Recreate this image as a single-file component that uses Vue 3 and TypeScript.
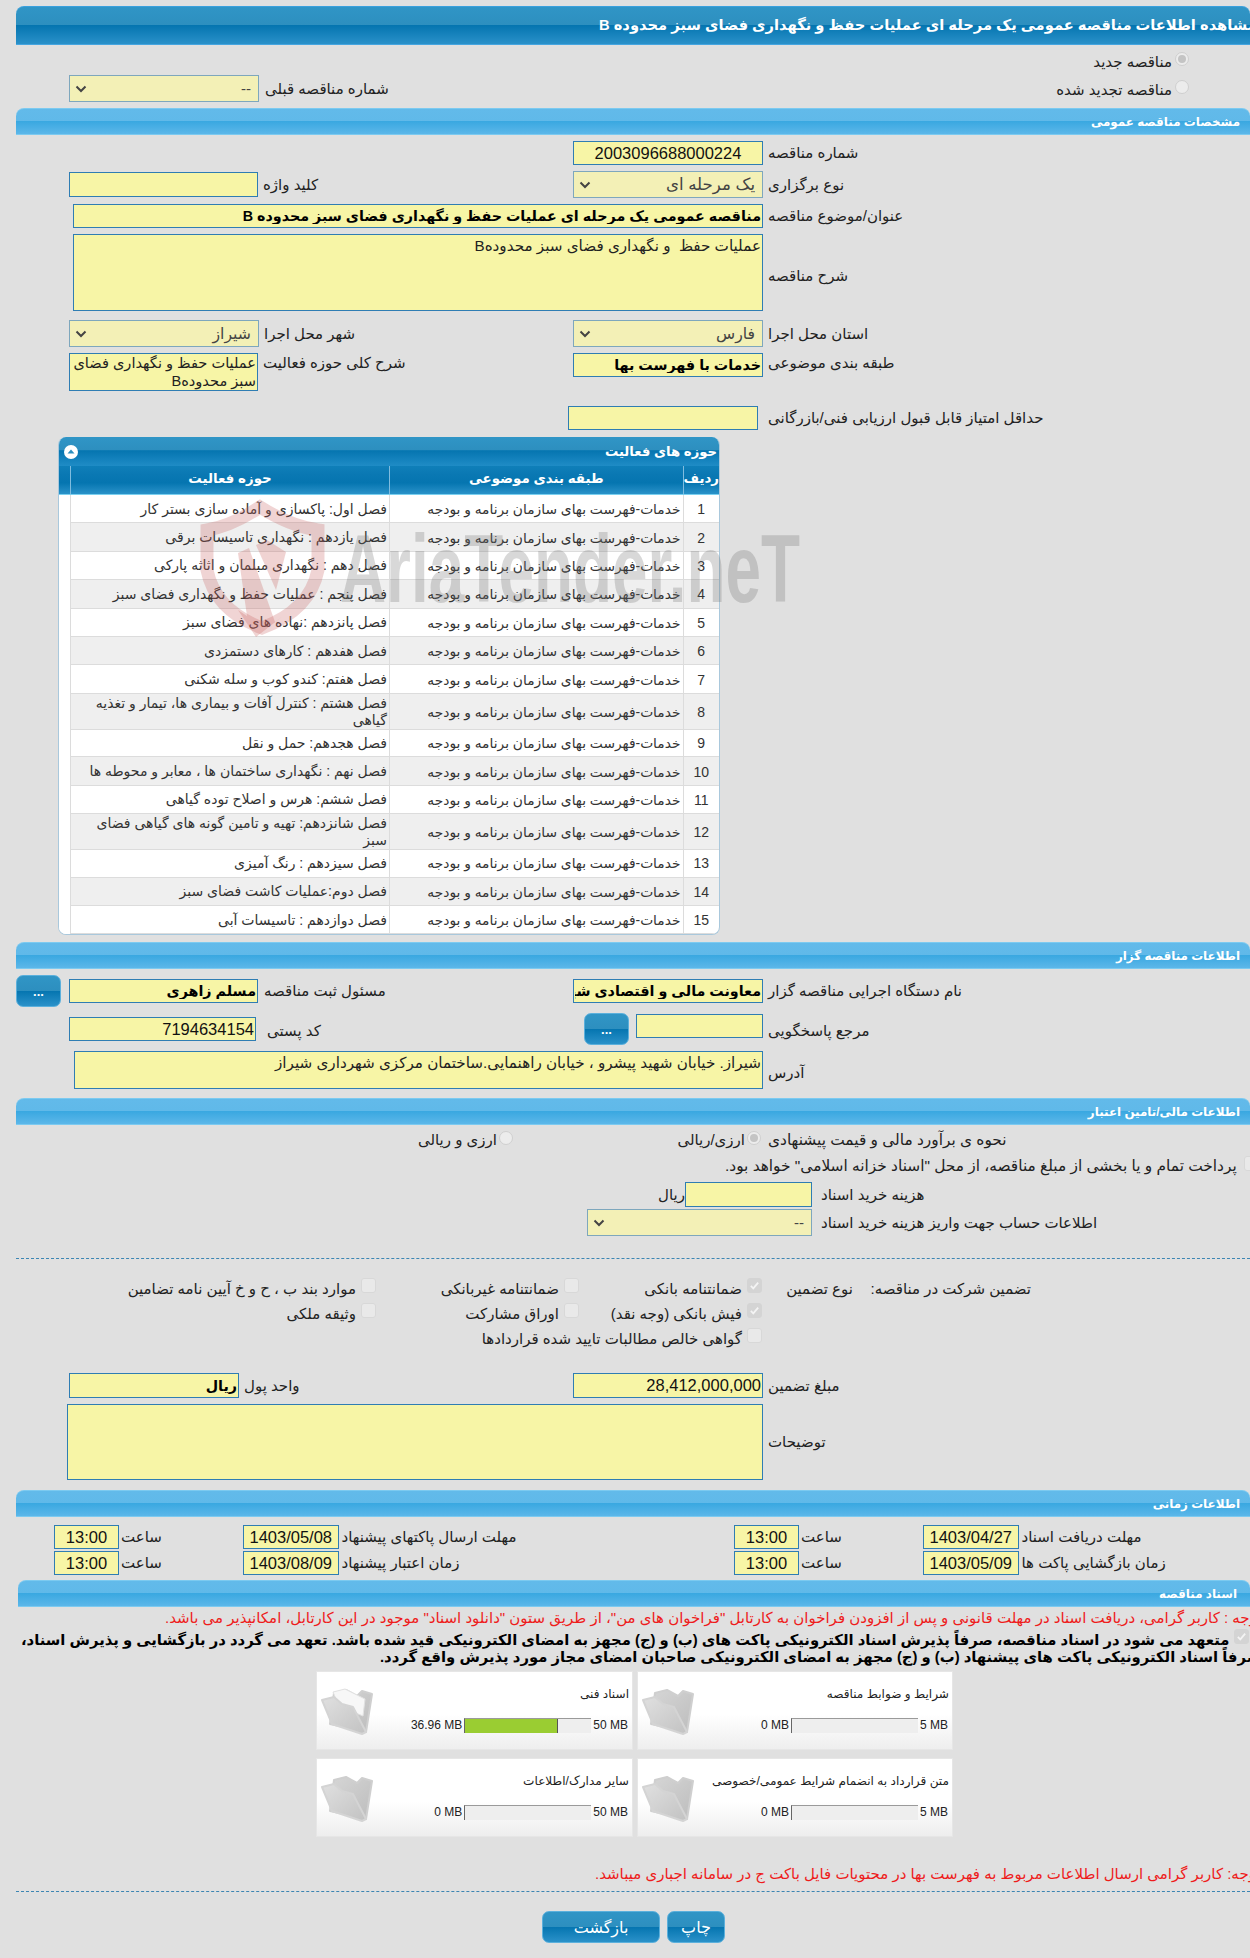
<script setup lang="ts">
interface Activity { id: number; text: string; tall?: boolean }
interface FileCard { title: string; used: string; max: string; pct: number; paper?: boolean; wide?: boolean }
interface Check { text: string; on?: boolean }

const category = 'خدمات-فهرست بهای سازمان برنامه و بودجه'
const activities: Activity[] = [
  { id: 1, text: 'فصل اول:  پاکسازی و آماده سازی بستر کار' },
  { id: 2, text: 'فصل یازدهم : نگهداری تاسیسات برقی' },
  { id: 3, text: 'فصل دهم : نگهداری مبلمان و اثاثه پارکی' },
  { id: 4, text: 'فصل پنجم : عملیات حفظ و نگهداری فضای سبز' },
  { id: 5, text: 'فصل پانزدهم :نهاده های فضای سبز' },
  { id: 6, text: 'فصل هفدهم : کارهای دستمزدی' },
  { id: 7, text: 'فصل هفتم: کندو کوب و سله شکنی' },
  { id: 8, text: 'فصل هشتم : کنترل آفات و بیماری ها، تیمار و تغذیه گیاهی', tall: true },
  { id: 9, text: 'فصل هجدهم: حمل و نقل' },
  { id: 10, text: 'فصل نهم : نگهداری ساختمان ها ، معابر و محوطه ها' },
  { id: 11, text: 'فصل ششم: هرس و اصلاح توده گیاهی' },
  { id: 12, text: 'فصل شانزدهم: تهیه و تامین گونه های گیاهی فضای سبز', tall: true },
  { id: 13, text: 'فصل سیزدهم : رنگ آمیزی' },
  { id: 14, text: 'فصل دوم:عملیات کاشت فضای سبز' },
  { id: 15, text: 'فصل دوازدهم : تاسیسات آبی' },
]
const guarantees: Check[][] = [
  [{ text: 'موارد بند ب ، ح و خ آیین نامه تضامین' }, { text: 'ضمانتنامه غیربانکی' }, { text: 'ضمانتنامه بانکی', on: true }],
  [{ text: 'وثیقه ملکی' }, { text: 'اوراق مشارکت' }, { text: 'فیش بانکی (وجه نقد)', on: true }],
]
const files: FileCard[] = [
  { title: 'اسناد فنی', used: '36.96 MB', max: '50 MB', pct: 73.9, paper: true, wide: true },
  { title: 'شرایط و ضوابط مناقصه', used: '0 MB', max: '5 MB', pct: 0 },
  { title: 'سایر مدارک/اطلاعات', used: '0 MB', max: '50 MB', pct: 0, wide: true },
  { title: 'متن قرارداد به انضمام شرایط عمومی/خصوصی', used: '0 MB', max: '5 MB', pct: 0 },
]
const dates = [
  [
    { label: 'مهلت ارسال پاکتهای پیشنهاد', value: '1403/05/08' },
    { label: 'مهلت دریافت اسناد', value: '1403/04/27' },
  ],
  [
    { label: 'زمان اعتبار پیشنهاد', value: '1403/08/09' },
    { label: 'زمان بازگشایی پاکت ها', value: '1403/05/09' },
  ],
]
</script>

<template>
  <div class="page">
    <div class="title"><span>مشاهده اطلاعات مناقصه عمومی یک مرحله ای عملیات حفظ و نگهداری فضای سبز محدوده B</span></div>

    <div class="row m5 h16">
      <div class="cell"></div>
      <div class="radio-end"><span class="lbl down3">مناقصه جدید</span><span class="radio on"></span></div>
    </div>
    <div class="row m9 h27">
      <div class="cell left">
        <div class="select w190"><svg class="chev" viewBox="0 0 12 8"><path d="M1.5 1.5 6 6l4.5-4.5" /></svg><span>--</span></div>
        <span class="lbl g6">شماره مناقصه قبلی</span>
      </div>
      <div class="radio-end lift2"><span class="lbl down3">مناقصه تجدید شده</span><span class="radio"></span></div>
    </div>

    <div class="bar m6"><span>مشخصات مناقصه عمومی</span></div>

    <div class="row m6">
      <div class="cell"></div>
      <div class="cell"><input class="in w190 num center" readonly value="2003096688000224" /><span class="lbl g5">شماره مناقصه</span></div>
    </div>
    <div class="row m6 h27">
      <div class="cell left">
        <input class="in w189 h25" readonly /><span class="lbl g5">کلید واژه</span>
      </div>
      <div class="cell">
        <div class="select w190"><svg class="chev" viewBox="0 0 12 8"><path d="M1.5 1.5 6 6l4.5-4.5" /></svg><span class="huge">یک مرحله ای</span></div>
        <span class="lbl g5">نوع برگزاری</span>
      </div>
    </div>
    <div class="row-full m6 i57">
      <input class="in w690 bold" dir="rtl" readonly value="مناقصه عمومی یک مرحله ای عملیات حفظ و نگهداری فضای سبز محدوده B" />
      <span class="lbl g5">عنوان/موضوع مناقصه</span>
    </div>
    <div class="row-full m6 i57">
      <textarea class="in w690 h77" dir="rtl" readonly>عملیات حفظ  و نگهداری فضای سبز محدودهB</textarea>
      <span class="lbl g5 down3">شرح مناقصه</span>
    </div>
    <div class="row m9 h27">
      <div class="cell left">
        <div class="select w190"><svg class="chev" viewBox="0 0 12 8"><path d="M1.5 1.5 6 6l4.5-4.5" /></svg><span class="big">شیراز</span></div>
        <span class="lbl g5">شهر محل اجرا</span>
      </div>
      <div class="cell">
        <div class="select w190"><svg class="chev" viewBox="0 0 12 8"><path d="M1.5 1.5 6 6l4.5-4.5" /></svg><span class="big">فارس</span></div>
        <span class="lbl g5">استان محل اجرا</span>
      </div>
    </div>
    <div class="row m6 top">
      <div class="cell left top">
        <textarea class="in w189 h38 tight" dir="rtl" readonly>عملیات حفظ و نگهداری فضای سبز محدودهB</textarea>
        <span class="lbl g5 lift">شرح کلی حوزه فعالیت</span>
      </div>
      <div class="cell top">
        <input class="in w190 bold" dir="rtl" readonly value="خدمات با فهرست بها" />
        <span class="lbl g5 lift">طبقه بندی موضوعی</span>
      </div>
    </div>
    <div class="row-full m15 i552">
      <input class="in w190" readonly /><span class="lbl g10">حداقل امتیاز قابل قبول ارزیابی فنی/بازرگانی</span>
    </div>

    <section class="panel">
      <header class="cap">
        <span class="collapse"><svg viewBox="0 0 14 14"><circle cx="7" cy="7" r="7" fill="#fff" /><path d="M3.5 8.6 7 4.6l3.5 4z" fill="#2c8fc0" /></svg></span>
        <span class="cap-text">حوزه های فعالیت</span>
      </header>
      <div class="thead">
        <div class="c0"></div>
        <div class="c3">حوزه فعالیت</div>
        <div class="c2">طبقه بندی موضوعی</div>
        <div class="c1">ردیف</div>
      </div>
      <div v-for="(a, i) in activities" :key="a.id" class="trow" :class="{ alt: i % 2 === 1, tall: a.tall }">
        <div class="c0"></div>
        <div class="c3"><span>{{ a.text }}</span></div>
        <div class="c2"><span>{{ category }}</span></div>
        <div class="c1">{{ a.id }}</div>
      </div>
    </section>

    <div class="bar m7"><span>اطلاعات مناقصه گزار</span></div>

    <div class="row m6 h32">
      <div class="cell">
        <button class="btn dots" type="button">...</button>
        <input class="in w189 bold i8" dir="rtl" readonly value="مسلم زاهری" /><span class="lbl g6">مسئول ثبت مناقصه</span>
      </div>
      <div class="cell"><input class="in w190 bold" dir="rtl" readonly value="معاونت مالی و اقتصادی شهرداری شیراز" /><span class="lbl g5">نام دستگاه اجرایی مناقصه گزار</span></div>
    </div>
    <div class="row m6 h32">
      <div class="cell left">
        <input class="in w187 num" readonly value="7194634154" /><span class="lbl g11 down2">کد پستی</span>
      </div>
      <div class="cell">
        <button class="btn dots short i11" type="button">...</button>
        <input class="in w127 i7 lift3" readonly /><span class="lbl g5 down2">مرجع پاسخگویی</span>
      </div>
    </div>
    <div class="row-full m6 i58">
      <textarea class="in w689 h38" dir="rtl" readonly>شیراز. خیابان شهید پیشرو ، خیابان راهنمایی.ساختمان مرکزی شهرداری شیراز</textarea>
      <span class="lbl g5 down3">آدرس</span>
    </div>

    <div class="bar m9"><span>اطلاعات مالی/تامین اعتبار</span></div>

    <div class="row m5 h20">
      <div class="cell"><div class="choice w497"><span class="lbl">ارزی و ریالی</span><span class="radio s2"></span></div></div>
      <div class="cell">
        <div class="choice w188"><span class="lbl">ارزی/ریالی</span><span class="radio on s2"></span></div><span class="lbl g7 xl">نحوه ی برآورد مالی و قیمت پیشنهادی</span>
      </div>
    </div>
    <div class="line m6 h20 i709">
      <span class="lbl xl">پرداخت تمام و یا بخشی از مبلغ مناقصه، از محل "اسناد خزانه اسلامی" خواهد بود.</span>
      <span class="chk far"></span>
    </div>
    <div class="row-full m6 i646">
      <span class="lbl riyal">ریال</span><input class="in w127 h25" readonly /><span class="lbl g9">هزینه خرید اسناد</span>
    </div>
    <div class="row-full m2 i571">
      <div class="select w225 h26"><svg class="chev" viewBox="0 0 12 8"><path d="M1.5 1.5 6 6l4.5-4.5" /></svg><span>--</span></div>
      <span class="lbl g9">اطلاعات حساب جهت واریز هزینه خرید اسناد</span>
    </div>

    <div class="dash m22"></div>

    <div class="gr m19">
      <template v-for="c in guarantees[0]" :key="c.text">
        <div class="gcell"><span class="chk" :class="{ on: c.on }"><svg v-if="c.on" viewBox="0 0 16 16"><path d="M3.5 8.5l3 3 6-7" /></svg></span><span class="lbl">{{ c.text }}</span></div>
      </template>
      <div class="gcell"><span class="lbl">نوع تضمین</span></div>
      <div class="gcell"><span class="lbl">تضمین شرکت در مناقصه:</span></div>
    </div>
    <div class="gr m5">
      <template v-for="c in guarantees[1]" :key="c.text">
        <div class="gcell"><span class="chk" :class="{ on: c.on }"><svg v-if="c.on" viewBox="0 0 16 16"><path d="M3.5 8.5l3 3 6-7" /></svg></span><span class="lbl">{{ c.text }}</span></div>
      </template>
    </div>
    <div class="gr m5">
      <div class="gcell"></div>
      <div class="gcell"></div>
      <div class="gcell"><span class="chk"></span><span class="lbl">گواهی خالص مطالبات تایید شده قراردادها</span></div>
    </div>

    <div class="row m25">
      <div class="cell left">
        <input class="in w170 h25 bold" dir="rtl" readonly value="ریال" /><span class="lbl g5">واحد پول</span>
      </div>
      <div class="cell">
        <input class="in w190 h25 num" readonly value="28,412,000,000" /><span class="lbl g5">مبلغ تضمین</span>
      </div>
    </div>
    <div class="row-full m6 i51">
      <textarea class="in w696 h76" dir="rtl" readonly></textarea>
      <span class="lbl g5">توضیحات</span>
    </div>

    <div class="bar m10"><span>اطلاعات زمانی</span></div>

    <div v-for="(r, i) in dates" :key="i" class="dates" :class="i === 0 ? 'm8' : 'm2'">
      <div v-for="d in r" :key="d.value" class="dgroup">
        <input class="in time num center" readonly value="13:00" />
        <span class="lbl stime">ساعت</span>
        <input class="in date num center" readonly :value="d.value" />
        <span class="lbl g3">{{ d.label }}</span>
      </div>
    </div>

    <div class="bar m5 inset2"><span>اسناد مناقصه</span></div>

    <div class="line m2 h18 i149 red">
      <span class="lbl">توجه : کاربر گرامی، دریافت اسناد در مهلت قانونی و پس از افزودن فراخوان به کارتابل "فراخوان های من"، از طریق ستون "دانلود اسناد" موجود در این کارتابل، امکانپذیر می باشد.</span>
    </div>
    <div class="line m4 h17 i5 strong">
      <span class="lbl">متعهد می شود در اسناد مناقصه، صرفاً پذیرش اسناد الکترونیکی پاکت های (ب) و (ج) مجهز به امضای الکترونیکی قید شده باشد. تعهد می گردد در بازگشایی و پذیرش اسناد،</span>
      <span class="chk on far2"><svg viewBox="0 0 16 16"><path d="M3.5 8.5l3 3 6-7" /></svg></span>
    </div>
    <div class="line h17 i364 strong">
      <span class="lbl">صرفاً اسناد الکترونیکی پاکت های پیشنهاد (ب) و (ج) مجهز به امضای الکترونیکی صاحبان امضای مجاز مورد پذیرش واقع گردد.</span>
    </div>

    <div class="cards">
      <article v-for="f in files" :key="f.title" class="card">
        <svg class="folder" viewBox="7 7 60 79">
          <defs>
            <linearGradient id="fb" x1="0" y1="0" x2="1" y2="1"><stop offset="0" stop-color="#d6d6d6" /><stop offset="1" stop-color="#bdbdbd" /></linearGradient>
            <linearGradient id="ff" x1="0" y1="0" x2="1" y2="1"><stop offset="0" stop-color="#e0e0e0" /><stop offset="1" stop-color="#c2c2c2" /></linearGradient>
          </defs>
          <path d="M25 29 37 26 48 32 53 27 63 30 57 68 21 60Z" fill="url(#fb)" stroke="#cfcfcf" stroke-linejoin="round" stroke-width="2" />
          <path v-if="f.paper" d="M24 28 36 25 56 35 54 52 30 42Z" fill="#f7f7f7" stroke="#e2e2e2" />
          <path d="M13 36 25 33 33 40 44 43 57 68 53 70 23 60Z" fill="url(#ff)" stroke="#d4d4d4" stroke-linejoin="round" stroke-width="2" />
        </svg>
        <div class="card-body">
          <div class="card-title">{{ f.title }}</div>
          <div class="meter">
            <span class="used">{{ f.used }}</span>
            <div class="track"><div class="fill" :style="{ width: f.pct + '%' }"></div></div>
            <span class="max">{{ f.max }}</span>
          </div>
        </div>
      </article>
    </div>

    <div class="line m28 h18 i579 red">
      <span class="lbl">توجه: کاربر گرامی ارسال اطلاعات مربوط به فهرست بها در محتویات فایل باکت ج در سامانه اجباری میباشد.</span>
    </div>

    <div class="dash m8"></div>

    <div class="actions">
      <button class="btn act wide" type="button">بازگشت</button>
      <button class="btn act" type="button">چاپ</button>
    </div>

    <svg class="watermark" viewBox="190 490 620 160" aria-hidden="true">
      <g fill="none" stroke="#c8605f" stroke-opacity=".27">
        <path stroke-width="13" d="M207 530Q232 526 260 507 290 526 318 530V570Q310 610 262 628 215 610 207 570Z" />
      </g>
      <g fill="#c8605f" fill-opacity=".28">
        <path d="M238 553 249 548 275 622 283 616 256 637 238 610 247 616Z" />
        <path d="M256 545 267 540 286 552 276 590Z" />
      </g>
      <text x="340" y="602" textLength="460" lengthAdjust="spacingAndGlyphs" class="wm-text">AriaTender.neT</text>
    </svg>
  </div>
</template>

<style scoped>
.page {
  position: relative;
  width: 1250px;
  height: 1958px;
  overflow: hidden;
  padding: 6px 0 0 16px;
  box-sizing: border-box;
  background: #e0e0e0;
  font-family: "Liberation Sans", "DejaVu Sans", sans-serif;
  font-size: 15px;
  color: #222;
  direction: ltr;
}
.title {
  height: 39px;
  box-sizing: border-box;
  background: linear-gradient(#3095c6 0, #2d8fbf 49%, #0575b0 50%, #2a91c9 100%);
  border-top: 1px solid #3aa0dd;
  border-bottom: 1px solid #45a5e0;
  border-radius: 8px 8px 0 0;
  color: #fff;
  font-weight: bold;
  font-size: 14.7px;
  line-height: 36px;
  white-space: nowrap;
  padding-left: 583px;
  overflow: hidden;
  direction: ltr;
}
.title span { display: inline-block; direction: rtl; }
.bar {
  height: 27px;
  box-sizing: border-box;
  background: linear-gradient(#62baea 0, #60b9e9 48%, #3aa8e1 50%, #5cb7e9 100%);
  border-top: 1px solid #7ccaf0;
  border-bottom: 1px solid #7ccaf0;
  border-radius: 8px 8px 0 0;
  color: #fff;
  font-weight: bold;
  font-size: 11.9px;
  line-height: 26px;
  text-align: right;
  padding-right: 10px;
  direction: rtl;
}
.inset2 { margin-left: 2px; padding-right: 13px; }
.row { display: grid; grid-template-columns: 557px 1fr; align-items: center; }
.row.top { align-items: start; height: 38px; }
.row-full { display: flex; align-items: center; }
.line { display: flex; align-items: center; white-space: nowrap; }
.cell { display: flex; align-items: center; min-width: 0; }
.cell.top { align-items: flex-start; }
.cell.left { padding-left: 53px; }
.radio-end { display: flex; align-items: center; justify-content: flex-end; padding-right: 61px; gap: 3px; height: 100%; }
.choice { display: flex; align-items: center; justify-content: flex-end; flex: none; }
.w497 { width: 497px; }
.w188 { width: 188px; }
.lbl { direction: rtl; white-space: nowrap; text-align: left; }
.xl { font-size: 15.4px; }
.riyal { width: 23px; flex: none; text-align: right; }
.down2 { position: relative; top: 2px; }
.down3 { position: relative; top: 3px; }
.lift2 { position: relative; top: -1.5px; }
.lift3 { position: relative; top: -3px; }
.lift { margin-top: 1px; }
.g3 { margin-left: 3px; }
.g5 { margin-left: 5px; }
.g6 { margin-left: 6px; }
.g7 { margin-left: 7px; }
.g9 { margin-left: 9px; }
.g10 { margin-left: 10px; }
.g11 { margin-left: 11px; }
.m2 { margin-top: 2px; }
.m4 { margin-top: 4px; }
.m5 { margin-top: 5px; }
.m6 { margin-top: 6px; }
.m7 { margin-top: 7px; }
.m8 { margin-top: 8px; }
.m9 { margin-top: 9px; }
.m10 { margin-top: 10px; }
.m15 { margin-top: 15px; }
.m19 { margin-top: 19px; }
.m22 { margin-top: 22px; }
.m25 { margin-top: 25px; }
.m28 { margin-top: 28px; }
.h16 { height: 16px; }
.h17 { height: 17px; }
.h18 { height: 18px; }
.h20 { height: 20px; }
.h27 { height: 27px; }
.h32 { height: 32px; }
.i5 { padding-left: 5px; }
.i51 { padding-left: 51px; }
.i57 { padding-left: 57px; }
.i58 { padding-left: 58px; }
.i149 { padding-left: 149px; }
.i364 { padding-left: 364px; }
.i552 { padding-left: 552px; }
.i571 { padding-left: 571px; }
.i579 { padding-left: 579px; }
.i646 { padding-left: 646px; }
.i709 { padding-left: 709px; }
.i7 { margin-left: 7px; }
.i8 { margin-left: 8px; }
.i11 { margin-left: 11px; }

.in {
  box-sizing: border-box;
  height: 24px;
  background: #f7f5a6;
  border: 1.5px solid #2f7db3;
  font: inherit;
  font-size: 15.2px;
  color: #222;
  padding: 0 1px;
  outline: none;
  resize: none;
  overflow: hidden;
  display: block;
  flex: none;
}
input.in { text-align: right; }
textarea.in { padding: 2px 1px; line-height: 18px; }
textarea.in.tight { line-height: 18px; padding: 0 1px; font-size: 14.6px; }
.w127 { width: 127px; }
.w170 { width: 170px; }
.w187 { width: 187px; }
.w189 { width: 189px; }
.w190 { width: 190px; }
.w225 { width: 225px; }
.w689 { width: 689px; }
.w690 { width: 690px; }
.w696 { width: 696px; }
.h25 { height: 25px; }
.h26 { height: 26px; }
.h38 { height: 38px; }
.h76 { height: 76px; }
.h77 { height: 77px; }
.in.bold { font-weight: bold; color: #000; font-size: 14.3px; }
.in.num { font-size: 16.5px; direction: ltr; color: #111; }
input.center { text-align: center; }

.select {
  box-sizing: border-box;
  height: 27px;
  flex: none;
  display: flex;
  align-items: center;
  justify-content: space-between;
  background: #f3f0b6;
  border: 1.5px solid #7ea7bd;
  padding: 0 7px 0 5px;
  color: #444;
  direction: ltr;
}
.select span { direction: rtl; }
.select .big { font-size: 15.7px; }
.select .huge { font-size: 16.6px; }
.chev { width: 12px; height: 8px; flex: none; }
.chev path { fill: none; stroke: #444; stroke-width: 2; }

.radio {
  width: 14px;
  height: 14px;
  box-sizing: border-box;
  border-radius: 50%;
  border: 1.5px solid #cfcfcf;
  background: #ececec;
  flex: none;
  display: inline-flex;
  align-items: center;
  justify-content: center;
}
.radio.on::after { content: ""; width: 8px; height: 8px; border-radius: 50%; background: #c4c4c4; }
.radio.s2 { margin: -5px 0 0 2px; }

.chk {
  width: 15px;
  height: 15px;
  box-sizing: border-box;
  border: 1.5px solid #d8d8d8;
  border-radius: 3px;
  background: #e9e9e9;
  flex: none;
  display: block;
}
.chk.on { background: #d4d4d4; border-color: #d4d4d4; }
.chk svg { display: block; width: 100%; height: 100%; }
.chk path { fill: none; stroke: #f4f4f4; stroke-width: 2.2; }
.far { margin-left: 7px; margin-top: -5px; }
.far2 { margin-left: 5px; margin-top: -6px; }

.panel {
  margin: 7px 0 0 42px;
  width: 662px;
  height: 498px;
  box-sizing: border-box;
  background: #fff;
  border: 1px solid #a9c8dc;
  border-top: 0;
  border-radius: 8px;
  overflow: hidden;
}
.cap {
  height: 29px;
  display: flex;
  align-items: center;
  justify-content: space-between;
  padding: 0 2px 0 5px;
  color: #fff;
  font-weight: bold;
  font-size: 13.2px;
  background: linear-gradient(#3095c6 0, #2d8fbf 45%, #0575b0 47%, #1f8cc6 100%);
  direction: ltr;
}
.cap-text { direction: rtl; }
.collapse { width: 14px; height: 14px; display: block; }
.collapse svg { display: block; }
.thead, .trow {
  display: grid;
  grid-template-columns: 12px 319px 293.5px 1fr;
  direction: ltr;
}
.thead {
  height: 29px;
  background: linear-gradient(#0f7fb9 0, #0a78b3 30%, #0575b0 60%, #2a92c9 100%);
  color: #fff;
  font-weight: bold;
  font-size: 13.4px;
  border-bottom: 1px solid #7ad0f0;
  box-sizing: border-box;
}
.thead > div { border-right: 1px solid #7fbcdf; display: flex; align-items: center; justify-content: center; direction: rtl; padding-bottom: 3px; }
.thead > div:last-child { border-right: 0; }
.trow { height: 28.4px; box-sizing: border-box; color: #333; font-size: 13.8px; }
.trow.tall { height: 35.2px; }
.trow > div { border-bottom: 1px solid #dcdcdc; border-right: 1px solid #dcdcdc; display: flex; align-items: center; box-sizing: border-box; padding-top: 1px; }
.trow > .c0 { background: #fff; border-bottom: 0; }
.trow.alt > div:not(.c0) { background: #efefef; }
.trow > .c1 { border-right: 0; justify-content: center; font-size: 14px; }
.trow > .c2, .trow > .c3 { direction: rtl; text-align: right; padding: 1px 2px 0 8px; }
.trow .c3 { line-height: 17px; font-size: 14px; }

.btn {
  border: 1px solid #5bb0dc;
  border-radius: 7px;
  background: linear-gradient(#3095c6 0, #2d8fbf 49%, #0575b0 50%, #2a91c9 100%);
  color: #fff;
  font: inherit;
  padding: 0;
  flex: none;
}
.dots { width: 45px; height: 32px; font-weight: bold; font-size: 13px; line-height: 32px; }
.short { height: 32px; }

.dash { border-top: 1px dashed #3d86b3; height: 0; }

.gr { display: grid; grid-template-columns: 360px 203px 183px 91px 178px; height: 20px; }
.gcell { display: flex; direction: rtl; align-items: flex-start; gap: 5px; min-width: 0; }
.gcell .lbl { margin-top: 1px; line-height: 20px; }

.dates { display: flex; padding-left: 38px; }
.dgroup { display: flex; align-items: center; width: 680px; flex: none; }
.time { width: 65px; }
.date { width: 95.5px; padding: 0; }
.stime { width: 122px; margin-left: 2px; }
.in.time, .in.date { height: 24px; }

.red { color: #ee1c1c; font-size: 15px; }
.strong { color: #000; font-weight: bold; font-size: 14.8px; }

.cards {
  margin: 6px 0 0 300px;
  display: grid;
  grid-template-columns: 317px 316px;
  grid-auto-rows: 79px;
  column-gap: 4px;
  row-gap: 8px;
}
.card {
  display: flex;
  background: linear-gradient(#fff 0, #fff 55%, #eeeeee 100%);
  border: 1px solid #e6e6e6;
  box-sizing: border-box;
}
.folder { width: 60px; height: 79px; flex: none; margin: -1px 0 0 -1px; }
.card-body { flex: 1; min-width: 0; display: flex; flex-direction: column; padding-right: 3px; }
.card-title { direction: rtl; margin-top: 14px; height: 17px; line-height: 17px; font-size: 12.1px; white-space: nowrap; }
.meter { display: flex; align-items: center; justify-content: flex-end; margin-top: 14px; height: 16px; gap: 2px; font-size: 12px; padding-right: 1px; }
.track { width: 127px; height: 15px; box-sizing: border-box; background: #eeeeee; border-top: 1px solid #9a9a9a; border-left: 1px solid #666; }
.fill { height: 100%; background: #9acd32; border-right: 1px solid #555; box-sizing: border-box; }
.fill[style*="width: 0%"] { border-right: 0; }

.actions { display: flex; margin: 19px 0 0 526px; gap: 7px; }
.act { height: 32px; width: 58px; font-size: 16px; }
.act.wide { width: 118px; }

.watermark { position: absolute; left: 190px; top: 490px; width: 620px; height: 160px; pointer-events: none; }
.wm-text { font-family: "Liberation Sans", sans-serif; font-weight: bold; font-size: 96px; fill: #6e6e6e; fill-opacity: .27; }
</style>

<style>
html, body { margin: 0; background: #e0e0e0; overflow-x: hidden; }
</style>
